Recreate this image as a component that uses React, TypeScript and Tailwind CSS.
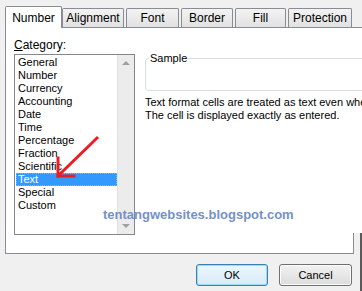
import React from "react";

const items = ["General","Number","Currency","Accounting","Date","Time","Percentage","Fraction","Scientific","Text","Special","Custom"];

const tabs = [
  { label: "Alignment", w: "w-[62px]" },
  { label: "Font", w: "w-[53px]" },
  { label: "Border", w: "w-[52px]" },
  { label: "Fill", w: "w-[51px]" },
  { label: "Protection", w: "w-[64px]" },
];

const FONT = "'Liberation Sans', Arial, sans-serif";

export default function App() {
  return (
    <div className="relative w-[362px] h-[291px] overflow-hidden bg-[#f0f0f0] text-[11px] text-black" style={{ fontFamily: FONT }}>
      {/* tabs */}
      <div className="flex items-end pl-[5px] pt-[5px] h-[27px]">
        <div className="relative z-10 w-[57px] h-[22px] -mb-px bg-white border border-b-0 border-[#898c95] rounded-t-[2px] flex items-center justify-center text-[12px]">Number</div>
        <div className="flex items-end gap-[2px]">
          {tabs.map((t) => (
            <div key={t.label} className={`${t.w} h-[19px] border border-b-0 border-[#898c95] rounded-t-[2px] bg-gradient-to-b from-[#f3f3f3] to-[#e1e1e1] flex items-center justify-center text-[12px]`}>
              {t.label}
            </div>
          ))}
        </div>
      </div>
      {/* panel */}
      <div className="ml-[5px] w-[400px] h-[227px] bg-white border border-[#898c95] flex pl-[8px] pt-[10px] gap-[10px]">
        <div className="flex flex-col w-[121px] shrink-0">
          <div className="h-[16px] leading-[14px] text-[12px]"><span className="underline">C</span>ategory:</div>
          <div className="h-[181px] border border-[#828790] flex">
            <div className="flex-1 flex flex-col pt-px pl-px">
              {items.map((it) => (
                <div key={it} className={`h-[13px] leading-[13px] pl-[2px] whitespace-nowrap overflow-hidden ${it === "Text" ? "bg-[#3399ff] text-white outline outline-1 outline-dotted outline-[#e8a040] -outline-offset-1" : ""}`}>{it}</div>
              ))}
            </div>
            <div className="w-[17px] shrink-0 bg-[#ececec] border-l border-[#e2e2e2] flex flex-col justify-between items-center py-[6px]">
              <div className="w-0 h-0 border-l-[4px] border-r-[4px] border-b-[4px] border-l-transparent border-r-transparent border-b-[#a0a0a0]" />
              <div className="w-0 h-0 border-l-[4px] border-r-[4px] border-t-[4px] border-l-transparent border-r-transparent border-t-[#a0a0a0]" />
            </div>
          </div>
        </div>
        <div className="flex-1 min-w-0 flex flex-col pt-[20px]">
          <div className="relative h-[33px] border border-[#d5dfe5] rounded-[3px]">
            <span className="absolute left-[3px] -top-[8px] bg-white px-[1px] leading-[14px]">Sample</span>
          </div>
          <div className="mt-[5px] leading-[13px] whitespace-nowrap">
            <div>Text format cells are treated as text even when a number is in the cell.</div>
            <div>The cell is displayed exactly as entered.</div>
          </div>
        </div>
      </div>
      {/* buttons */}
      <div className="flex justify-start pl-[196px] gap-[11px] mt-[10px]">
        <button className="w-[72px] h-[22px] rounded-[3px] border border-[#3c7fb1] bg-gradient-to-b from-[#eaf6fd] to-[#d9ebf7] shadow-[inset_0_0_0_1px_#9fd8f3] text-[11px]" style={{ fontFamily: FONT }}>OK</button>
        <button className="w-[73px] h-[22px] rounded-[3px] border border-[#707070] bg-gradient-to-b from-[#f2f2f2] to-[#dcdcdc] shadow-[inset_0_0_0_1px_#fcfcfc] text-[11px]" style={{ fontFamily: FONT }}>Cancel</button>
      </div>
      {/* right edge detail */}
      <div className="absolute left-[353px] top-[233px] w-[9px] h-[58px] bg-[#f0f0f0]">
        <div className="h-[21px] border-l border-b border-[#898c95] w-[1px]" />
        <div className="absolute right-0 top-0 w-[2px] h-full bg-[#5a5a5a]" />
      </div>
      {/* watermark */}
      <div className="absolute left-[103px] top-[207px] text-[13px] font-bold text-[#7592c6] leading-[16px]" style={{ fontFamily: FONT }}>tentangwebsites.blogspot.com</div>
      {/* red arrow */}
      <svg className="absolute left-0 top-0" width="362" height="291" viewBox="0 0 362 291">
        <g stroke="#ea1d25" strokeWidth="3" fill="none" strokeLinecap="square">
          <line x1="97" y1="138" x2="59" y2="175" />
          <line x1="58" y1="158" x2="58" y2="176" />
          <line x1="58" y1="176" x2="74" y2="176" />
        </g>
      </svg>
    </div>
  );
}
